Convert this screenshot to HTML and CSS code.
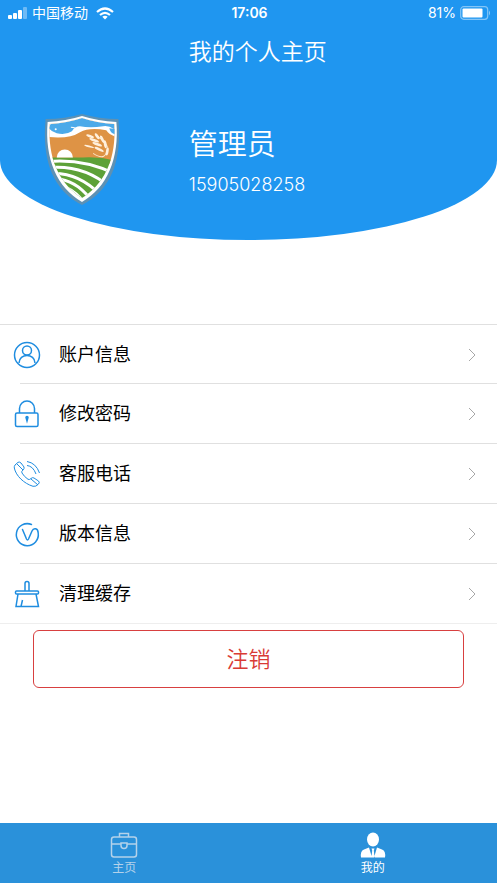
FILE: index.html
```html
<!DOCTYPE html>
<html lang="zh-CN">
<head>
    <meta charset="UTF-8">
    <meta name="viewport" content="width=device-width, initial-scale=1">
    <title>我的个人主页</title>
    <link rel="stylesheet" href="styles.css">
</head>
<body>
    <header class="hero">
        <div class="status">
            <div class="status-left">
                <svg width="20" height="12" viewBox="0 0 20 12" fill="#fff">
                    <rect x="0" y="8" width="4" height="4" rx="1"/>
                    <rect x="5" y="6" width="4" height="6" rx="1"/>
                    <rect x="10" y="3" width="4" height="9" rx="1"/>
                    <rect x="15" y="0" width="4" height="12" rx="1" opacity=".35"/>
                </svg>
                <span>中国移动</span>
                <svg class="wifi" width="18" height="13" viewBox="0 0 18 13" fill="none" stroke="#fff" stroke-width="2.2">
                    <path d="M1 5Q9-2 17 5"/>
                    <path d="M4 8Q9 3.600 14 8"/>
                    <path d="M6.300 9.800Q9 7.800 11.700 9.800L9 12.500Z" fill="#fff" stroke="none"/>
                </svg>
            </div>
            <div class="clock">17:06</div>
            <div class="status-right">
                <span>81%</span>
                <svg width="31" height="14" viewBox="0 0 31 14">
                    <rect x=".7" y=".7" width="27" height="12.600" rx="3" fill="none" stroke="#fff" stroke-opacity=".45" stroke-width="1.200"/>
                    <rect x="2.500" y="2.500" width="20" height="9" rx="1" fill="#fff"/>
                    <path d="M29 4.500q2 2.500 0 5z" fill="#fff" opacity=".5"/>
                </svg>
            </div>
        </div>
        <h1 class="title">我的个人主页</h1>
        <div class="profile">
            <div class="avatar">
                <svg width="78" height="92" viewBox="1 0 76 91">
                    <defs>
                        <clipPath id="shield">
                            <path d="M7 10Q24 9 39 4Q54 9 71 10C73 43 62 69 39 83C16 69 5 43 7 10Z"/>
                        </clipPath>
                    </defs>
                    <path d="M3 5Q22 5 39 0Q56 5 75 5C79 47 67 76 39 90C11 76 -1 47 3 5Z" fill="#5d91b4"/>
                    <path d="M5 8Q23 7 39 2Q55 7 73 8C76 44 64 73 39 87C14 73 2 44 5 8Z" fill="#fff"/>
                    <g clip-path="url(#shield)">
                        <path d="M0 0H78V50H0Z" fill="#de9345"/>
                        <path d="M0 0H78V24Q67 22 63 16Q46 13 37 18Q25 26 0 22Z" fill="#fff"/>
                        <path d="M6 14L8 10Q24 9 39 4Q54 9 71 10V15Q65 11 60 12Q47 14 37 12Q32 12 29 17Q23 21 14 19Q9 18 6 14Z" fill="#4caae9"/>
                        <path d="M28 13q5 0 6 3l-5 2" fill="none" stroke="#fff"/>
                        <path d="M66 14l6 1v5q-5-1-6-6z" fill="#4caae9"/>
                        <circle cx="13" cy="15" r="1" fill="#fff"/>
                        <path d="M6 43H40Q58 42 75 47V92H0Z" fill="#5da138"/>
                        <path d="M14 43a8 8 0 0 1 16 0Z" fill="#fff"/>
                        <g fill="none" stroke="#fff">
                            <path d="M6 47Q43 44 75 61" stroke-width="3"/>
                            <path d="M6 53Q41 50 66 72" stroke-width="3"/>
                            <path d="M9 59Q36 58 57 80" stroke-width="3"/>
                            <path d="M13 64Q33 65 48 85" stroke-width="3"/>
                            <path d="M18 71Q30 74 40 86" stroke-width="3"/>
                        </g>
                        <path d="M50 39Q64 48 64 32Q61 26 54 22" fill="none" stroke="#fbe4c4"/>
                        <g fill="#fff0dc">
                            <ellipse cx="47" cy="22" rx="4" ry="1.300" transform="rotate(20 47 22)"/>
                            <ellipse cx="51" cy="26" rx="5" ry="1.300" transform="rotate(20 51 26)"/>
                            <ellipse cx="54" cy="30" rx="5" ry="1.300" transform="rotate(20 54 30)"/>
                            <ellipse cx="56" cy="35" rx="5" ry="1.300" transform="rotate(25 56 35)"/>
                            <ellipse cx="46" cy="32" rx="5" ry="1" transform="rotate(15 46 32)"/>
                            <ellipse cx="54" cy="22" rx="3.500" ry="1.400" transform="rotate(55 54 22)"/>
                            <ellipse cx="59" cy="25" rx="4" ry="1.400" transform="rotate(65 59 25)"/>
                            <ellipse cx="62" cy="30" rx="4" ry="1.400" transform="rotate(80 62 30)"/>
                            <ellipse cx="64" cy="37" rx="4" ry="1.300" transform="rotate(100 64 37)"/>
                        </g>
                    </g>
                </svg>
            </div>
            <div class="info">
                <div class="name">管理员</div>
                <div class="phone">15905028258</div>
            </div>
        </div>
    </header>

    <main class="content">
        <nav class="menu">
            <a class="item" href="#account">
                <svg class="icon" viewBox="0 0 28 28">
                    <circle cx="14" cy="14" r="12.500"/>
                    <circle cx="14" cy="9.500" r="4.500"/>
                    <path d="M6 22C6 12 22 12 22 22"/>
                </svg>
                <span class="label">账户信息</span>
                <svg class="arrow" viewBox="0 0 8 14"><path d="M1 1l6 6-6 6"/></svg>
            </a>
            <a class="item" href="#password">
                <svg class="icon" viewBox="0 0 28 28">
                    <rect x="2.500" y="13" width="22.500" height="13.500" rx="1.500"/>
                    <path d="M6.500 13V8.500a7.500 7.500 0 0 1 15 0V13"/>
                    <path d="M14 16.500a1 1 0 0 1 1 1L14 21l-1-3.500a1 1 0 0 1 1-1z" fill="#1f8de0"/>
                </svg>
                <span class="label">修改密码</span>
                <svg class="arrow" viewBox="0 0 8 14"><path d="M1 1l6 6-6 6"/></svg>
            </a>
            <a class="item" href="#service">
                <svg class="icon thin" viewBox="0 0 28 28">
                    <path d="M2 5L5 2.300Q6.500 1.500 8 3L11 7Q11.500 8.500 10 10Q8 11.500 9 13Q11 16.500 15 19.300Q16.500 20 18 18.500Q19.500 17 21 18L25.500 21Q27 22.500 25.500 24Q23 27 20 26.300C11 23.500 3 16 1.300 8Q1 6.500 2 5Z"/>
                    <path d="M4 4l6 6M18 19l7 6M14 5.500Q20 6 23 14M14 1.500Q23 3 26.500 13"/>
                </svg>
                <span class="label">客服电话</span>
                <svg class="arrow" viewBox="0 0 8 14"><path d="M1 1l6 6-6 6"/></svg>
            </a>
            <a class="item" href="#version">
                <svg class="icon" viewBox="0 0 28 28">
                    <path d="M18.500 4.500A11 11 0 1 0 25.200 13C25 8 20.500 7.500 19 11L15.500 19Q14.500 21 13.500 19L9.500 9.500" stroke-linecap="round"/>
                </svg>
                <span class="label">版本信息</span>
                <svg class="arrow" viewBox="0 0 8 14"><path d="M1 1l6 6-6 6"/></svg>
            </a>
            <a class="item" href="#cache">
                <svg class="icon" viewBox="0 0 28 28">
                    <path d="M12 11V3.500a2 2 0 0 1 4 0V11"/>
                    <rect x="2.500" y="11" width="23" height="3" rx="1"/>
                    <path d="M5 14L3 26.500H25.500L23 14M9.500 20L8 26.500"/>
                </svg>
                <span class="label">清理缓存</span>
                <svg class="arrow" viewBox="0 0 8 14"><path d="M1 1l6 6-6 6"/></svg>
            </a>
        </nav>
        <button class="logout" type="button">注销</button>
    </main>

    <nav class="tabbar">
        <a class="tab" href="#home">
            <svg width="28" height="28" viewBox="0 0 28 28" fill="none" stroke="currentColor" stroke-width="1.500">
                <rect x="1.500" y="6" width="25" height="20" rx="2.500"/>
                <path d="M9.500 6V2.500h9V6M1.500 13H11M17 13h9.500M11 12h6v2.500a3 3 0 0 1-6 0z"/>
            </svg>
            <span>主页</span>
        </a>
        <a class="tab active" href="#mine">
            <svg width="28" height="28" viewBox="0 0 28 28" fill="currentColor">
                <ellipse cx="14" cy="8.500" rx="6" ry="7"/>
                <path d="M2 26.500Q1 20 5 18.500L10 16.500L13 26.500ZM26 26.500Q27 20 23 18.500L18 16.500L15 26.500ZM12.500 17.500h3l-.7 2 .8 7h-3.200l.8-7z"/>
            </svg>
            <span>我的</span>
        </a>
    </nav>
</body>
</html>
```

FILE: styles.css
```css
* {
    box-sizing: border-box;
}

body {
    margin: 0;
    min-height: 100vh;
    display: flex;
    flex-direction: column;
    background: #fff;
    color: #000;
    font-family: Inter, "Noto Sans CJK SC", sans-serif;
}

a {
    color: inherit;
    text-decoration: none;
}

svg {
    display: block;
    flex-shrink: 0;
}

/* blue header with the curved bottom */
.hero {
    background: #1f96f0;
    color: #fff;
    padding-bottom: 34px;
    border-radius: 0 0 50% 50% / 0 0 80px 80px;
}

.status {
    display: grid;
    grid-template-columns: 1fr auto 1fr;
    align-items: center;
    height: 26px;
    padding: 0 6px 0 8px;
    font-size: 14px;
    line-height: 20px;
}

.status-left,
.status-right {
    display: flex;
    align-items: center;
    gap: 4px;
}

.status-right {
    justify-content: flex-end;
}

.wifi {
    margin-left: 4px;
}

.clock {
    font-weight: 600;
}

.title {
    margin: 0 0 0 38%;
    font-size: 23px;
    font-weight: 350;
    line-height: 52px;
}

.profile {
    display: flex;
    align-items: center;
    padding-top: 36px;
}

.avatar {
    width: 38%;
    padding-left: 43px;
}

.name {
    font-size: 29px;
    font-weight: 350;
    line-height: 44px;
}

.phone {
    margin-top: 6px;
    font-size: 18px;
    font-weight: 350;
    line-height: 24px;
}

.content {
    flex: 1;
    padding-top: 84px;
}

.menu {
    border-top: 1px solid #e0e0e0;
    border-bottom: 1px solid #eee;
}

.item {
    display: flex;
    align-items: center;
    height: 60px;
    padding-right: 21px;
    padding-left: 13px;
    background: linear-gradient(#e0e0e0, #e0e0e0) 20px 100% / 100% 1px no-repeat;
}

.item:first-child,
.item:last-child {
    height: 59px;
}

.item:last-child {
    background: none;
}

.icon {
    width: 28px;
    height: 28px;
    fill: none;
    stroke: #1f8de0;
    stroke-width: 1.5;
}

.icon.thin {
    stroke-width: 1;
}

.label {
    flex: 1;
    margin-left: 18px;
    font-size: 18px;
    line-height: 28px;
}

.arrow {
    width: 8px;
    height: 14px;
    fill: none;
    stroke: #a8a8a8;
}

.logout {
    display: block;
    width: calc(100% - 66px);
    height: 58px;
    margin: 6px auto;
    padding: 0 0 4px;
    background: #fff;
    border: 1px solid #d84040;
    border-radius: 6px;
    color: #d93a35;
    font-family: inherit;
    font-size: 22px;
    font-weight: 350;
}

.tabbar {
    display: flex;
    height: 60px;
    background: #2a91da;
}

.tab {
    flex: 1;
    display: flex;
    flex-direction: column;
    align-items: center;
    padding-top: 8px;
    color: #b4d2ea;
    font-size: 12px;
    line-height: 18px;
}

.tab.active {
    color: #fff;
}
```
